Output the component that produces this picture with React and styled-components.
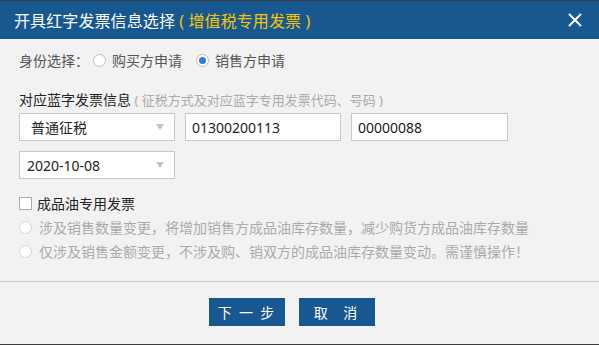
import React from 'react';
import styled, { createGlobalStyle } from 'styled-components';

const blue = '#185891';
const line = '#c8c8c8';

const GlobalStyle = createGlobalStyle`
  html, body {
    margin: 0;
    padding: 0;
    background: #f2f2f2;
  }
  body {
    font-family: "Noto Sans", "Noto Sans CJK SC", sans-serif;
  }
`;

const Dialog = styled.div`
  width: 599px;
  height: 345px;
  box-sizing: border-box;
  display: flex;
  flex-direction: column;
  background: #f2f2f2;
  border-top: 1px solid #3c3c3c;
  border-bottom: 1px solid #3c3c3c;
`;

const Header = styled.div`
  height: 38px;
  flex: none;
  display: flex;
  align-items: center;
  justify-content: space-between;
  padding: 0 17px 0 14px;
  background: ${blue};
`;

const Title = styled.div`
  font-size: 16px;
  color: #fff;
  letter-spacing: 0.1px;
  white-space: pre;

  & span {
    color: #f7c600;
  }
`;

const Close = styled.svg`
  width: 14px;
  height: 14px;
  display: block;
`;

const Body = styled.div`
  flex: 1;
  padding: 11px 19px 0;
  border-bottom: 1px solid ${line};
  font-size: 14px;
`;

const Row = styled.div`
  display: flex;
  align-items: center;
  height: ${p => p.h || 20}px;
  margin-top: ${p => p.mt || 0}px;
  color: ${p => p.color || '#555'};
  white-space: pre;
`;

const Hint = styled.span`
  color: #aaa;
  font-size: 13px;
`;

const RadioDot = styled.span`
  width: 13px;
  height: 13px;
  flex: none;
  box-sizing: border-box;
  border: 1px solid ${p => (p.disabled ? '#d4d4d4' : '#bdbdbd')};
  border-radius: 50%;
  background: #fff;
  margin: ${p => p.m || '0 6px 0 4px'};
  display: flex;
  align-items: center;
  justify-content: center;

  &::after {
    content: '';
    display: ${p => (p.checked ? 'block' : 'none')};
    width: 7px;
    height: 7px;
    border-radius: 50%;
    background: #2f7be0;
  }
`;

const Option = styled.label`
  display: flex;
  align-items: center;
  margin-right: ${p => p.mr || 0}px;
  color: ${p => (p.disabled ? '#aaa' : '#555')};
`;

const Check = styled.span`
  width: 13px;
  height: 13px;
  box-sizing: border-box;
  border: 1px solid #aaa;
  background: #fff;
  margin-right: 5px;
  flex: none;
`;

const Fields = styled.div`
  display: flex;
  gap: 10px;
  margin-top: ${p => p.mt || 0}px;
`;

const Box = styled.div`
  width: ${p => p.w || 156}px;
  height: 28px;
  box-sizing: border-box;
  border: 1px solid ${line};
  background: #fff;
  display: flex;
  align-items: center;
  justify-content: space-between;
  padding: 0 10px 0 ${p => p.pl || 6}px;
  font-size: 14px;
  color: #222;
`;

const Arrow = styled.span`
  width: 0;
  height: 0;
  border-left: 4px solid transparent;
  border-right: 4px solid transparent;
  border-top: 6px solid #c4c4c4;
`;

const Footer = styled.div`
  height: 62px;
  flex: none;
  display: flex;
  align-items: center;
  justify-content: center;
  gap: 14px;
  padding-right: 15px;
  padding-bottom: 2px;
  box-sizing: border-box;
`;

const Button = styled.button`
  width: 76px;
  height: 28px;
  border: none;
  background: ${blue};
  color: #fff;
  font-family: "Noto Sans CJK SC", sans-serif;
  font-size: 14px;
  letter-spacing: ${p => p.ls || 1}px;
  white-space: pre;
  padding: 0;
`;

const App = () => (
  <Dialog>
    <GlobalStyle />
    <Header>
      <Title>
        开具红字发票信息选择<span> ( 增值税专用发票 )</span>
      </Title>
      <Close viewBox="0 0 14 14">
        <path d="M1 1L13 13M13 1L1 13" stroke="#fff" strokeWidth="2" />
      </Close>
    </Header>
    <Body>
      <Row>
        身份选择：
        <Option mr={10}>
          <RadioDot />
          购买方申请
        </Option>
        <Option>
          <RadioDot checked />
          销售方申请
        </Option>
      </Row>
      <Row mt={19} color="#222">
        对应蓝字发票信息<Hint> ( 征税方式及对应蓝字专用发票代码、号码 )</Hint>
      </Row>
      <Fields mt={4}>
        <Box pl={11}>
          普通征税
          <Arrow />
        </Box>
        <Box>01300200113</Box>
        <Box w={157}>00000088</Box>
      </Fields>
      <Fields mt={10}>
        <Box pl={7}>
          2020-10-08
          <Arrow />
        </Box>
      </Fields>
      <Row h={24} mt={12} color="#222">
        <Check />
        成品油专用发票
      </Row>
      <Row h={24}>
        <Option disabled>
          <RadioDot disabled m="0 7px 0 0" />
          涉及销售数量变更，将增加销售方成品油库存数量，减少购货方成品油库存数量
        </Option>
      </Row>
      <Row h={24}>
        <Option disabled>
          <RadioDot disabled m="0 7px 0 0" />
          仅涉及销售金额变更，不涉及购、销双方的成品油库存数量变动。需谨慎操作！
        </Option>
      </Row>
    </Body>
    <Footer>
      <Button ls={2}>下 一 步</Button>
      <Button ls={3}>取  消</Button>
    </Footer>
  </Dialog>
);

export default App;
